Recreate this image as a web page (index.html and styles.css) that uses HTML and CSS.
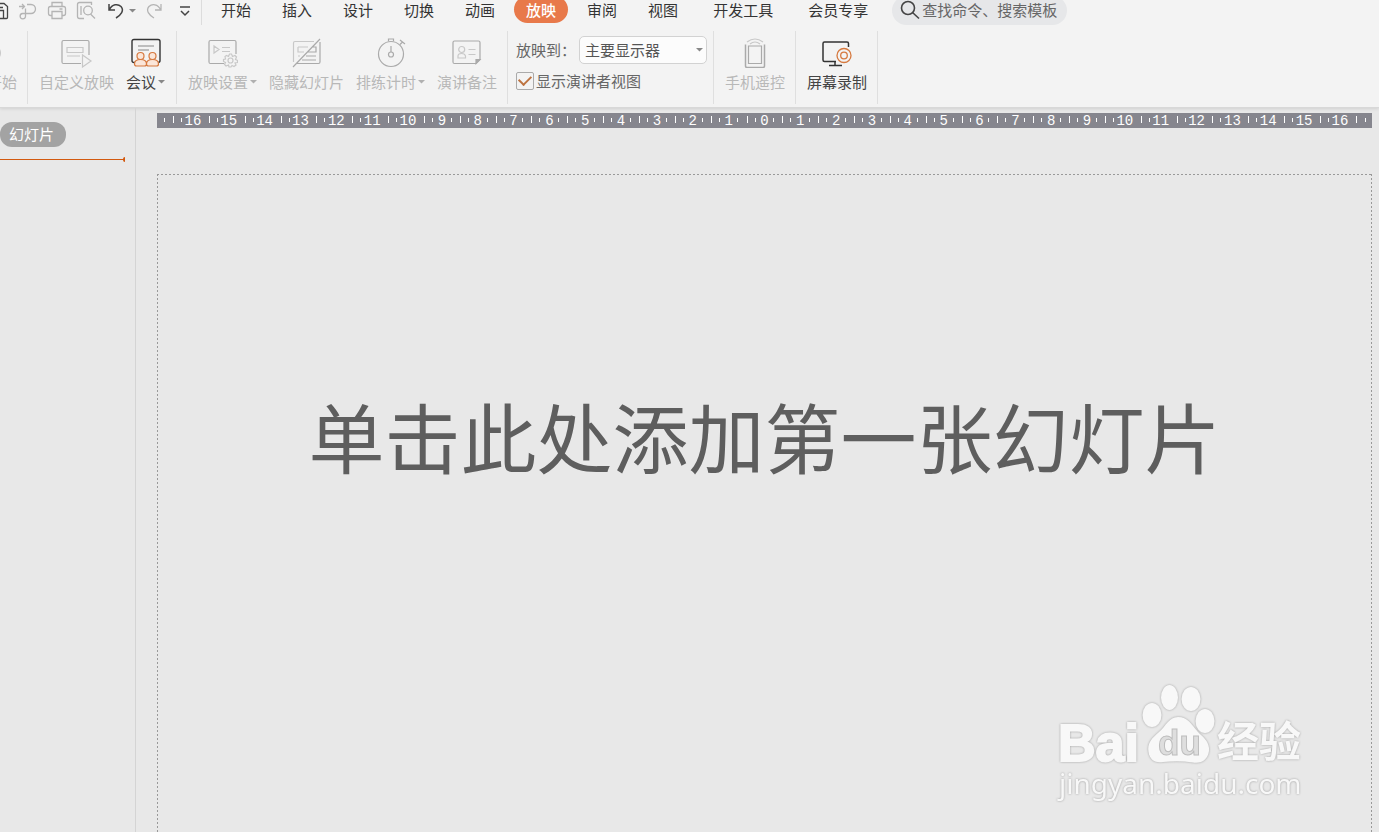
FILE: index.html
```html
<!DOCTYPE html>
<html lang="zh-CN">
<head>
<meta charset="utf-8">
<title>演示文稿</title>
<link rel="stylesheet" href="styles.css">
</head>
<body>
<div class="app">
  <header class="header">
    <div class="topbar">
      <div class="quick">
        <button class="q q-save" type="button" aria-label="保存"><svg width="9" height="20" viewBox="0 0 9 20" stroke="#444"><path d="M0 2.500H4L7.500 5.500V16.500Q7.500 17.500 6.500 17.500H0M0 9.500H3.500V17.500M0 6.500H3"/></svg></button>
        <button class="q" type="button" aria-label="输出"><svg width="20" height="20" viewBox="0 0 20 20"><path d="M1 5.500H6M4 3L6.500 5.500L4 8M9 3.500H13A4.500 4.500 0 0 1 13 12.500H4.500A2.700 2.700 0 1 0 7.500 15.500V7.500"/></svg></button>
        <button class="q" type="button" aria-label="打印"><svg width="20" height="20" viewBox="0 0 20 20"><path d="M5 5.500V1.500H15V5.500M4.500 14.500H3.500Q1.500 14.500 1.500 12.500V7.500Q1.500 5.500 3.500 5.500H16.500Q18.500 5.500 18.500 7.500V12.500Q18.500 14.500 16.500 14.500H15.500M5 10.500H15V17.500H5ZM12.500 8H15.500"/></svg></button>
        <button class="q" type="button" aria-label="打印预览"><svg width="20" height="20" viewBox="0 0 20 20"><path d="M8 17.500H3.500Q1.500 17.500 1.500 15.500V3.500Q1.500 1.500 3.500 1.500H15.500V4M5 5V14M14.500 13L19 17.500"/><circle cx="12" cy="9.500" r="4.300"/></svg></button>
        <button class="q q-undo" type="button" aria-label="撤销"><svg width="18" height="20" viewBox="0 0 18 20" stroke="#444" stroke-width="1.500"><path d="M2 3V9H8M2.500 8.500C5 3 11 2.500 14 5.500C17.500 9.500 14 14 9 17"/></svg></button>
        <button class="q q-arrow" type="button" aria-label="撤销列表"><svg width="7" height="4" viewBox="0 0 7 4"><path class="solid" d="M0 0H7L3.500 3.500Z"/></svg></button>
        <button class="q q-redo" type="button" aria-label="恢复"><svg width="18" height="20" viewBox="0 0 18 20"><path d="M16 3V9H10M15.500 8.500C13 3 7 2.500 4 5.500C.5 9.500 4 14 9 17"/></svg></button>
        <button class="q q-more" type="button" aria-label="更多"><svg width="10" height="20" viewBox="0 0 10 20" stroke="#444" stroke-width="1.500"><path d="M0 6H10M1 10L5 14L9 10"/></svg></button>
      </div>
      <nav class="tabs">
        <a href="#">开始</a><a href="#">插入</a><a href="#">设计</a><a href="#">切换</a><a href="#">动画</a><a href="#" class="active">放映</a><a href="#">审阅</a><a href="#">视图</a><a href="#" class="wide">开发工具</a><a href="#" class="wide">会员专享</a>
      </nav>
      <label class="search">
        <svg width="20" height="20" viewBox="0 0 20 20" stroke="#444" stroke-width="1.600"><circle cx="8" cy="8" r="6.500"/><path d="M12.500 12.500L19 18.500"/></svg>
        <input type="text" aria-label="搜索" placeholder="查找命令、搜索模板">
      </label>
    </div>
    <div class="ribbon">
      <section class="group group-cut">
        <button class="tool off" type="button"><svg width="30" height="30" viewBox="0 0 30 30"><circle cx="0" cy="15" r="13"/></svg><span>开始</span></button>
      </section>
      <section class="group">
        <button class="tool off" type="button"><svg width="32" height="30" viewBox="0 0 32 30"><path d="M20 25.500H2.500Q1 25.500 1 24V4Q1 2.500 2.500 2.500H26.500Q28 2.500 28 4V17"/><path class="pale" d="M6 9.500H22V14.500H6ZM6 18H19"/><path class="pale" d="M21.500 17V29L30 23Z"/></svg><span>自定义放映</span></button>
        <button class="tool" type="button"><svg width="30" height="30" viewBox="0 0 30 30"><path stroke="#333" stroke-width="1.400" d="M4 24.500H3Q1 24.500 1 22.500V3.500Q1 1.500 3 1.500H27Q29 1.500 29 3.500V22.500Q29 24.500 27 24.500"/><path stroke="#888" d="M7 8H23M7 12H18"/><g stroke="#d6793f" fill="#fbe6d9"><path d="M3.500 26Q3.500 21.500 9.500 21.500T15.500 26Q15.500 28 13.500 28H5.500Q3.500 28 3.500 26ZM15.500 26Q15.500 21.500 21.500 21.500T27.500 26Q27.500 28 25.500 28H17.500Q15.500 28 15.500 26Z"/><circle cx="9.500" cy="18" r="3.500"/><circle cx="21.500" cy="18" r="3.500"/></g></svg><span class="drop">会议<svg width="7" height="4" viewBox="0 0 7 4"><path class="solid" d="M0 0H7L3.500 3.500Z"/></svg></span></button>
      </section>
      <section class="group">
        <button class="tool off" type="button"><svg width="30" height="30" viewBox="0 0 30 30"><path d="M16 25.500H2.500Q1 25.500 1 24V4Q1 2.500 2.500 2.500H26.500Q28 2.500 28 4V16"/><path class="pale" d="M6 8V15L11 11.500ZM14 9.500H22M14 13.500H22"/><path class="pale" d="M20.500 18.500L21.500 16H23.500L24.500 18.500L27 17.500L28.500 19L27.500 21.500L29.500 22.500V24.500L27 25L28 27L26 28.500L24 27.500L23 29H21L20.500 27L18 28L16.500 26.500L17.500 24.500L15.500 23.500V21.500L17.500 21L17 18.500L18.500 17.500Z"/><circle class="pale" cx="22.500" cy="22.500" r="2.500"/></svg><span class="drop">放映设置<svg width="7" height="4" viewBox="0 0 7 4"><path class="solid" d="M0 0H7L3.500 3.500Z"/></svg></span></button>
        <button class="tool off" type="button"><svg width="30" height="30" viewBox="0 0 30 30"><path class="pale" d="M1.500 24V5Q1.500 3.500 3 3.500H22M6 9H16M6 9V14H12M6 18H8"/><path d="M5 25.500H26.500Q28 25.500 28 24V4M1 29L28 1M20 9H24V14H16M14 18H24M10 22H24"/></svg><span>隐藏幻灯片</span></button>
        <button class="tool off" type="button"><svg width="30" height="30" viewBox="0 0 30 30"><circle cx="15" cy="16" r="12.500"/><path d="M12.500 3V1H17.500V3M15 8V14M24 2L29 6M26.500 4L24 6.500"/><circle cx="15" cy="16.500" r="2.500"/></svg><span class="drop">排练计时<svg width="7" height="4" viewBox="0 0 7 4"><path class="solid" d="M0 0H7L3.500 3.500Z"/></svg></span></button>
        <button class="tool off" type="button"><svg width="30" height="30" viewBox="0 0 30 30"><path d="M24 25.500H2.500Q1 25.500 1 24V4.500Q1 3 2.500 3H26.500Q28 3 28 4.500V21.500Z"/><path class="fold" d="M24 25.500V21.500H28Z"/><path class="pale" d="M6 20V18Q6 15.500 9.500 15.500T13.500 18V20ZM16.500 11.500H23.500M16.500 16.500H23.500"/><circle class="pale" cx="9.700" cy="11.500" r="3"/></svg><span>演讲备注</span></button>
      </section>
      <section class="group settings">
        <div class="row"><label for="screen">放映到：</label><span class="select"><select id="screen"><option>主要显示器</option></select><svg width="7" height="4" viewBox="0 0 7 4"><path class="solid" d="M0 0H7L3.500 3.500Z"/></svg></span></div>
        <label class="row check"><input type="checkbox" checked>显示演讲者视图</label>
      </section>
      <section class="group">
        <button class="tool off" type="button"><svg width="30" height="30" viewBox="0 0 30 30"><path stroke-width="1.500" d="M5.500 6.500V28Q5.500 29.500 7 29.500H23Q24.500 29.500 24.500 28V6.500"/><path d="M8.500 8H21.500V25.500H8.500Z"/><path class="pale" d="M7 4Q15-2 23 4M10 6Q15 2 20 6"/></svg><span>手机遥控</span></button>
      </section>
      <section class="group">
        <button class="tool" type="button"><svg width="30" height="30" viewBox="0 0 30 30"><path stroke="#333" stroke-width="1.500" d="M14 23.500H2.500Q1 23.500 1 22V5.500Q1 4 2.500 4H25Q26.500 4 26.500 5.500V9M13 24V27M7 27.500H20"/><g stroke="#d6793f" stroke-width="1.300"><circle cx="22" cy="17.500" r="7"/><circle cx="22" cy="17.500" r="3.300"/></g></svg><span>屏幕录制</span></button>
      </section>
    </div>
  </header>
  <div class="work">
    <aside class="side">
      <button class="side-tab" type="button">幻灯片</button>
      <div class="marker"></div>
    </aside>
    <main class="canvas">
      <div class="ruler">
        <i class="tail"></i>
        <span class="two">16</span><span class="two">15</span><span class="two">14</span><span class="two">13</span><span class="two">12</span><span class="two">11</span><span class="two">10</span><span>9</span><span>8</span><span>7</span><span>6</span><span>5</span><span>4</span><span>3</span><span>2</span><span>1</span><span>0</span><span>1</span><span>2</span><span>3</span><span>4</span><span>5</span><span>6</span><span>7</span><span>8</span><span>9</span><span class="two">10</span><span class="two">11</span><span class="two">12</span><span class="two">13</span><span class="two">14</span><span class="two">15</span><span class="two">16</span>
        <i class="tail end"></i>
      </div>
      <div class="slide"><h1>单击此处添加第一张幻灯片</h1></div>
    </main>
  </div>
  <svg class="brand" width="264" height="134" viewBox="0 0 264 134">
    <text class="latin" x="8" y="81" font-size="52">Bai</text>
    <ellipse cx="102" cy="35" rx="9.500" ry="12"/><ellipse cx="119.500" cy="17.500" rx="8.500" ry="12.500"/><ellipse cx="141" cy="19" rx="9.500" ry="12"/><ellipse cx="155" cy="41" rx="9.500" ry="12"/>
    <path d="M128 37C119 37 116 46 109 52C102 58 97 63 98.500 72C100 81 106 83 113 82C123 81 133 81 143 82.500C152 84 158 79 159 71C160 62 153 57 148 52C141 44 138 37 128 37Z"/>
    <text class="du" x="108" y="75" font-size="35">du</text>
    <text class="han" x="167" y="77" font-size="42">经验</text>
    <text class="site" x="9" y="114" font-size="28">jingyan.baidu.com</text>
  </svg>
</div>
</body>
</html>
```
FILE: styles.css
```css
* { box-sizing: border-box; }
body {
  margin: 0;
  font: 15px/20px "Noto Sans CJK SC", sans-serif;
  color: #444;
  background: #e8e8e8;
}
button, input, select { font: inherit; color: inherit; }
button { border: 0; padding: 0; background: none; }
svg { display: block; fill: none; }
.solid { fill: #888; stroke: none; }

.app {
  position: relative;
  display: flex;
  flex-direction: column;
  height: 100vh;
  overflow: hidden;
}
.header {
  flex: none;
  background: #f3f3f3;
  border-bottom: 1px solid #d8d8d8;
  box-shadow: 0 1px 3px #0000001a;
}

.topbar { display: flex; margin-top: -4px; height: 29px; }
.quick {
  display: flex;
  align-items: center;
  width: 202px;
  border-right: 1px solid #dcdcdc;
}
.q { stroke: #b4b4b4; stroke-width: 1.3px; margin-right: 9px; }
.q-undo { margin: 0 4px 0 2px; }
.q-redo { margin-right: 17px; }
.q-more { margin-right: 0; }

.tabs { display: flex; margin-left: 7px; gap: 7px; }
.tabs a {
  height: 27px;
  padding: 4px 12px 3px;
  border-radius: 14px;
  color: #333;
  text-decoration: none;
  white-space: nowrap;
}
.tabs .wide { margin-left: 4px; }
.tabs .active { background: #e8794a; color: #fff; font-weight: 500; }

.search {
  display: flex;
  align-items: center;
  width: 175px;
  margin-left: 12px;
  padding: 0 8px 1px;
  border-radius: 15px;
  background: #e6e7e9;
}
.search svg { flex: none; }
.search input {
  flex: 1;
  min-width: 0;
  border: 0;
  padding: 0 0 0 2px;
  background: none;
  outline: 0;
}
.search input::placeholder { color: #666; opacity: 1; }

.ribbon { display: flex; padding: 6px 0 3px; height: 82px; }
.group {
  display: flex;
  gap: 12px;
  padding: 7px 10px 0 11px;
  border-right: 1px solid #dfdfdf;
}
.group-cut { width: 28px; padding-left: 0; justify-content: flex-end; overflow: hidden; }
.group-cut + .group { padding-right: 11px; }
.tool {
  display: flex;
  flex-direction: column;
  align-items: center;
  gap: 4px;
  white-space: nowrap;
  stroke-width: 1.2px;
}
.off { color: #b8b8b8; stroke: #aaa; }
.off .pale { stroke: #c8c8c8; fill: #f3f3f3; }
.off .solid { fill: #b0b0b0; }
.off .fold { fill: #aaa; }
.drop { display: flex; align-items: center; gap: 2px; }

.settings { flex-direction: column; gap: 7px; width: 206px; padding: 5px 6px 0 8px; color: #666; }
.row { display: flex; align-items: center; white-space: nowrap; }
.row > label { width: 63px; }
.select { display: grid; flex: 1; align-items: center; }
.select select, .select svg { grid-area: 1 / 1; }
.select svg { justify-self: end; margin-right: 4px; pointer-events: none; }
.select select {
  appearance: none;
  height: 28px;
  border: 1px solid #d2d2d2;
  border-radius: 5px;
  padding: 0 5px;
  background: #fcfcfc;
  color: #555;
}
.check { gap: 2px; }
.check input {
  appearance: none;
  display: grid;
  place-items: center;
  width: 18px;
  height: 18px;
  margin: 0;
  border: 1px solid #aaa;
  border-radius: 2px;
}
.check input:checked::after {
  content: "";
  width: 10px;
  height: 6px;
  margin-bottom: 4px;
  border: solid #bd7340;
  border-width: 0 0 2px 2px;
  rotate: -45deg;
}

.work { display: flex; flex: 1; min-height: 0; }
.side { flex: none; width: 136px; padding-top: 14px; border-right: 1px solid #d4d4d4; }
.side-tab {
  display: block;
  width: 66px;
  height: 25px;
  padding: 0 3px 2px 0;
  border-radius: 12px;
  background: #a3a3a3;
  color: #fff;
}
.marker {
  display: flex;
  align-items: center;
  justify-content: flex-end;
  width: 125px;
  height: 5px;
  margin-top: 10px;
  background: linear-gradient(#d2590f, #d2590f) center / 100% 1px no-repeat;
}
.marker::after { content: ""; width: 2px; height: 5px; background: #d2590f; border-radius: 2px 0 0 2px; }

.canvas {
  display: flex;
  flex-direction: column;
  flex: 1;
  gap: 46px;
  min-width: 0;
  padding: 5px 7px 0 21px;
}
.ruler {
  display: flex;
  flex: none;
  height: 15px;
  background: #86868e;
  color: #fff;
  font: 14px/17px "Liberation Mono", monospace;
  overflow: hidden;
}
.ruler span {
  flex: 1;
  text-align: center;
  background:
    linear-gradient(#fff, #fff) 0 3px / 1px 7px no-repeat,
    linear-gradient(#fff, #fff) 23% 5px / 1px 4px no-repeat,
    linear-gradient(#fff, #fff) 77% 5px / 1px 4px no-repeat;
}
.ruler .two {
  text-indent: 4px;
  background:
    linear-gradient(#fff, #fff) 0 3px / 1px 7px no-repeat,
    linear-gradient(#fff, #fff) 23% 5px / 1px 4px no-repeat;
}
.tail { width: 16px; background: linear-gradient(#fff, #fff) 7px 5px / 1px 4px no-repeat; }
.end {
  background:
    linear-gradient(#fff, #fff) 0 3px / 1px 7px no-repeat,
    linear-gradient(#fff, #fff) 9px 5px / 1px 4px no-repeat;
}
.slide {
  flex: 1;
  padding-top: 206px;
  background:
    repeating-linear-gradient(90deg, #999 0 2px, transparent 2px 4px) top / 100% 1px no-repeat,
    repeating-linear-gradient(#999 0 2px, transparent 2px 4px) left / 1px 100% no-repeat,
    repeating-linear-gradient(#999 0 2px, transparent 2px 4px) right / 1px 100% no-repeat;
}
.slide h1 {
  margin: 0;
  text-align: center;
  color: #5e5e5e;
  font-size: 76px;
  font-weight: 400;
  line-height: 110px;
  white-space: nowrap;
}

.brand {
  position: absolute;
  right: 65px;
  bottom: 18px;
  fill: #f8f8f8;
  filter: drop-shadow(0 0 1px #a0a0a0);
  pointer-events: none;
}
.latin, .du { font-family: "Liberation Sans", sans-serif; }
.latin { font-weight: 700; stroke: #f8f8f8; stroke-width: 2px; }
.du { fill: #dedede; stroke: #bdbdbd; stroke-width: 1px; font-weight: 700; }
.han { font-family: "Noto Sans CJK SC", sans-serif; font-weight: 700; }
.site { font-family: "Noto Sans", sans-serif; }
```
